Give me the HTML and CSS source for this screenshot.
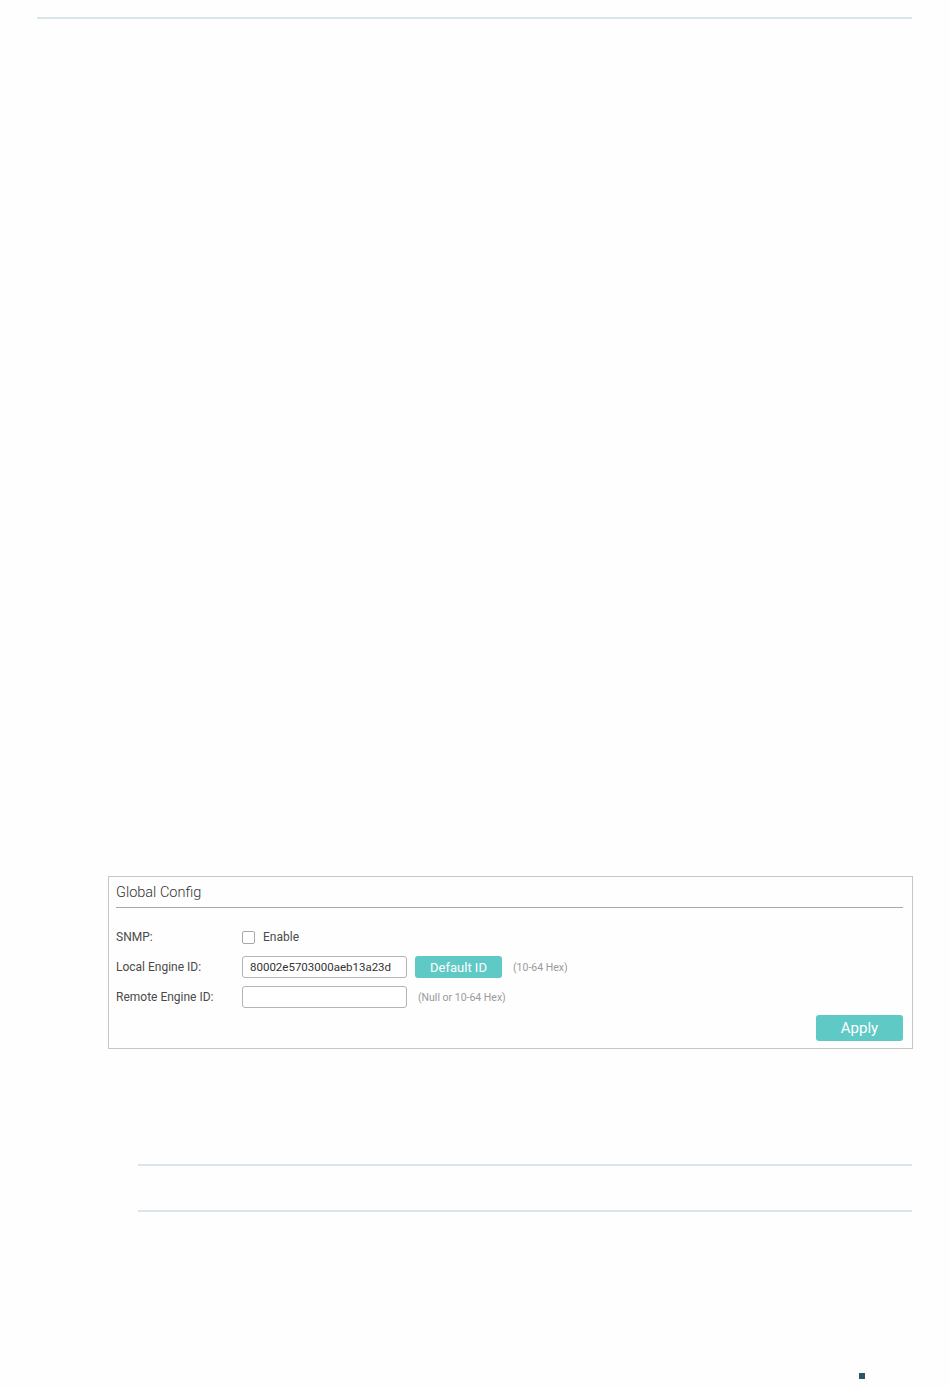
FILE: index.html
```html
<!DOCTYPE html>
<html lang="en">
<head>
  <meta charset="UTF-8">
  <meta name="viewport" content="width=device-width, initial-scale=1.0">
  <title>SNMP Global Config</title>
  <link rel="stylesheet" href="styles.css">
</head>
<body>

  <div class="page">
    <div class="top-rule"></div>

    <!-- Screenshot of the Global Config panel -->
    <div class="panel">
      <div class="panel-title">Global Config</div>

      <div class="form">
        <div class="row">
          <label class="label">SNMP:</label>
          <span class="checkbox"></span>
          <span class="check-text">Enable</span>
        </div>
        <div class="row">
          <label class="label">Local Engine ID:</label>
          <div class="input">80002e5703000aeb13a23d</div>
          <button class="btn btn-default">Default ID</button>
          <span class="hint">(10-64 Hex)</span>
        </div>
        <div class="row">
          <label class="label">Remote Engine ID:</label>
          <div class="input"></div>
          <span class="hint">(Null or 10-64 Hex)</span>
        </div>
      </div>

      <div class="actions">
        <button class="btn btn-apply">Apply</button>
      </div>
    </div>

    <div class="note"></div>

    <div class="footer">
      <span class="mark"></span>
    </div>
  </div>

</body>
</html>
```

FILE: styles.css
```css
body {
  margin: 0;
  padding: 0;
  background-color: #fefefe;
  font-family: 'Roboto', 'Liberation Sans', sans-serif;
  color: #444;
}

.page {
  width: 875px;
  padding: 17px 38px 0 37px;
}

.top-rule {
  height: 2px;
  background-color: #dae5e9;
}

.panel {
  width: 805px;
  margin: 857px 0 0 71px;
  border: 1px solid #c6c6c6;
  padding: 0 9px 7px 7px;
  box-sizing: border-box;
}

.panel-title {
  height: 30px;
  line-height: 32px;
  font-size: 14.5px;
  font-weight: 300;
  color: #333;
  border-bottom: 1px solid #a9a9a9;
}

.form {
  margin-top: 14px;
}

.row {
  display: flex;
  align-items: center;
  height: 30px;
}

.label {
  width: 126px;
  font-size: 12px;
  color: #4a4a4a;
}

.checkbox {
  width: 11px;
  height: 11px;
  border: 1px solid #a8a8a8;
  border-radius: 2px;
  background-color: #fff;
}

.check-text {
  margin-left: 8px;
  font-size: 12px;
  color: #4a4a4a;
}

.input {
  width: 165px;
  height: 22px;
  box-sizing: border-box;
  border: 1px solid #b4b4b4;
  border-radius: 3px;
  padding-left: 7px;
  font-size: 11.5px;
  line-height: 21px;
  color: #333;
  background-color: #fff;
}

.btn {
  border: none;
  border-radius: 3px;
  background-color: #5fc9c5;
  color: #fff;
  font-family: 'Roboto', 'Liberation Sans', sans-serif;
  padding: 0;
  cursor: pointer;
}

.btn-default {
  width: 87px;
  height: 22px;
  margin-left: 8px;
  font-size: 13px;
}

.hint {
  margin-left: 11px;
  font-size: 10.5px;
  color: #9a9a9a;
}

.actions {
  display: flex;
  justify-content: flex-end;
  margin-top: 3px;
}

.btn-apply {
  width: 87px;
  height: 26px;
  font-size: 15px;
}

.note {
  width: 774px;
  height: 44px;
  margin: 115px 0 0 101px;
  border-top: 2px solid #dbe6ea;
  border-bottom: 2px solid #dbe6ea;
}

.footer {
  margin: 161px 0 0 822px;
  height: 8px;
}

.mark {
  display: block;
  width: 6px;
  height: 6px;
  background-color: #2b5566;
}
```
